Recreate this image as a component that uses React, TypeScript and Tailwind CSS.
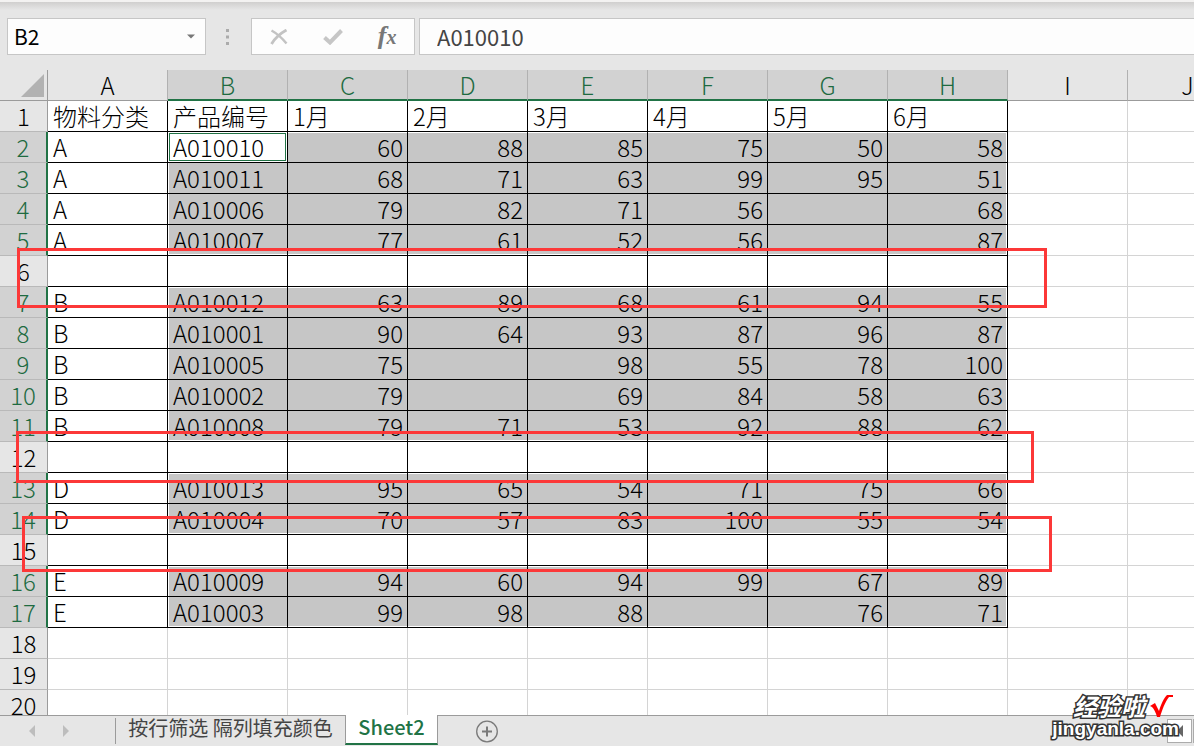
import React from "react";

const columns = ["A", "B", "C", "D", "E", "F", "G", "H", "I", "J"];

const data: string[][] = [
  ["物料分类", "产品编号", "1月", "2月", "3月", "4月", "5月", "6月"],
  ["A", "A010010", "60", "88", "85", "75", "50", "58"],
  ["A", "A010011", "68", "71", "63", "99", "95", "51"],
  ["A", "A010006", "79", "82", "71", "56", "", "68"],
  ["A", "A010007", "77", "61", "52", "56", "", "87"],
  [],
  ["B", "A010012", "63", "89", "68", "61", "94", "55"],
  ["B", "A010001", "90", "64", "93", "87", "96", "87"],
  ["B", "A010005", "75", "", "98", "55", "78", "100"],
  ["B", "A010002", "79", "", "69", "84", "58", "63"],
  ["B", "A010008", "79", "71", "53", "92", "88", "62"],
  [],
  ["D", "A010013", "95", "65", "54", "71", "75", "66"],
  ["D", "A010004", "70", "57", "83", "100", "55", "54"],
  [],
  ["E", "A010009", "94", "60", "94", "99", "67", "89"],
  ["E", "A010003", "99", "98", "88", "", "76", "71"],
  [],
  [],
  [],
];

const TABLE_ROWS = 17;
const TABLE_COLS = 8;

const isSelectedRow = (r: number) => r > 0 && r < TABLE_ROWS && (data[r]?.length ?? 0) > 0;
const isSelectedCol = (c: number) => c >= 1 && c < TABLE_COLS;

function selectionEdges(r: number, c: number): React.CSSProperties {
  const edges: string[] = [];
  if (!isSelectedRow(r - 1)) edges.push("inset 0 1px 0 #fff");
  if (!isSelectedRow(r + 1)) edges.push("inset 0 -1px 0 #fff");
  if (c === 1) edges.push("inset 1px 0 0 #fff");
  if (c === TABLE_COLS - 1) edges.push("inset -1px 0 0 #fff");
  return { boxShadow: edges.join(", ") || undefined };
}

function Cell({ r, c }: { r: number; c: number }) {
  const text = data[r][c] ?? "";
  const inTable = r < TABLE_ROWS && c < TABLE_COLS;
  const border = inTable ? "border-black" : "border-[#d4d4d4]";
  const align = r > 0 && c >= 2 ? "text-right" : "text-left";
  if (r === 1 && c === 1) {
    return (
      <td className="h-[31px] border-r border-b border-black bg-white py-0 pr-1 pl-[5px] leading-[30px] shadow-[inset_0_0_0_1px_#fff,inset_0_0_0_2px_#217346]">
        {text}
      </td>
    );
  }
  const selected = isSelectedRow(r) && isSelectedCol(c);
  return (
    <td
      className={`h-[31px] border-r border-b py-0 pr-1 pl-[5px] leading-[30px] whitespace-nowrap ${border} ${align} ${selected ? "bg-[#c6c6c6]" : "bg-white"}`}
      style={selected ? selectionEdges(r, c) : undefined}
    >
      {text}
    </td>
  );
}

function ColumnHeader({ c, name }: { c: number; name: string }) {
  const on = isSelectedCol(c);
  return (
    <th
      scope="col"
      className={`h-[31px] border-r border-r-[#b1b1b1] p-0 leading-[28px] font-light ${
        on
          ? "border-b-2 border-b-[#217346] bg-[#d2d2d2] text-[#1e6b41]"
          : "border-b border-b-[#9b9b9b] bg-[#e6e6e6] text-black"
      }`}
    >
      {name}
    </th>
  );
}

function RowHeader({ r }: { r: number }) {
  const on = isSelectedRow(r);
  return (
    <th
      scope="row"
      className={`h-[31px] border-b border-b-[#b9b9b9] p-0 text-center leading-[30px] font-light ${
        on
          ? "border-r-2 border-r-[#217346] bg-[#d2d2d2] text-[#1e6b41]"
          : "border-r border-r-[#9b9b9b] bg-[#e6e6e6] text-black"
      }`}
    >
      {r + 1}
    </th>
  );
}

function FormulaBar() {
  return (
    <header className="flex h-[70px] shrink-0 flex-col bg-[#e6e6e6]">
      <div className="h-0.5 bg-[#f3f2f1]" />
      <div className="h-2 bg-linear-to-b from-[#d0cfce] to-[#e6e6e6]" />
      <div className="mt-2 flex h-[37px] pl-[7px]">
        <div className="flex w-[199px] items-center border border-[#c6c6c6] bg-[#fdfdfd] pr-2">
          <input
            aria-label="Name Box"
            defaultValue="B2"
            className="min-w-0 flex-1 bg-transparent pl-1.5 text-[21px] text-black outline-none"
          />
          <button type="button" aria-label="Named ranges" className="p-0.5">
            <svg width="8" height="5" viewBox="0 0 8 5">
              <path d="M0 0.5h8L4 4.5z" fill="#777" />
            </svg>
          </button>
        </div>
        <div className="flex w-[45px] items-center justify-center pr-0.5">
          <svg width="3" height="16" viewBox="0 0 3 16" fill="#ababab">
            <path d="M0 0h3v3H0zM0 6.500h3v3H0zM0 13h3v3H0z" />
          </svg>
        </div>
        <div className="flex w-[164px] items-center justify-around border border-[#c6c6c6] bg-[#fdfdfd]">
          <button type="button" aria-label="Cancel">
            <svg width="18" height="16" viewBox="0 0 18 16" fill="none" stroke="#c3c3c3">
              <path d="M1.500 1.500C6 4 12 9 16.500 14.500" strokeWidth="2.400" />
              <path d="M16.500 1C11 4 5 9 1.500 15" strokeWidth="2.800" />
            </svg>
          </button>
          <button type="button" aria-label="Enter">
            <svg width="20" height="16" viewBox="0 0 20 16" fill="none" stroke="#c6c6c6">
              <path d="M1.500 8.500L7 13.500L18.500 1.500" strokeWidth="4" />
            </svg>
          </button>
          <button
            type="button"
            aria-label="Insert Function"
            className="pb-0.5 font-['Liberation_Serif',serif] text-[26px] leading-none font-bold text-[#777] italic"
          >
            f<span className="text-[20px]">x</span>
          </button>
        </div>
        <input
          aria-label="Formula"
          defaultValue="A010010"
          className="ml-1 min-w-0 flex-1 border border-r-0 border-[#c6c6c6] bg-[#fdfdfd] pl-[17px] text-[22px] text-[#444] outline-none"
        />
      </div>
    </header>
  );
}

function Watermark() {
  return (
    <div className="pointer-events-none absolute right-[15px] bottom-1.5 flex flex-col items-end text-white [paint-order:stroke_fill] [-webkit-text-stroke:3px_#333]">
      <div className="flex items-center gap-1 pr-1.5">
        <span className="text-[24px] leading-[24px] font-bold italic">经验啦</span>
        <svg width="24" height="24" viewBox="0 0 24 24">
          <path d="M1 12L6 9L10 17C12 10 15 4 18 1H24V3H20C16 8 13 16 11 23H8C7 19 5 15 3 13Z" fill="#f00" />
        </svg>
      </div>
      <span className="font-['Liberation_Sans',sans-serif] text-[19px] leading-[22px] font-bold">jingyanla.com</span>
    </div>
  );
}

function SheetTabs() {
  return (
    <footer className="relative flex h-[31px] shrink-0 bg-[#e6e6e6] text-[20px] leading-[24px]">
      <div className="flex w-[116px] items-center justify-between border-t border-[#9b9b9b] pl-7">
        <button type="button" aria-label="Previous sheet">
          <svg width="8" height="12" viewBox="0 0 8 12">
            <path d="M7 0v12L1 6z" fill="#bdbdbd" />
          </svg>
        </button>
        <button type="button" aria-label="Next sheet" className="mr-5">
          <svg width="8" height="12" viewBox="0 0 8 12">
            <path d="M1 0v12L7 6z" fill="#bdbdbd" />
          </svg>
        </button>
        <span className="h-[26px] w-px bg-[#9b9b9b]" />
      </div>
      <button type="button" className="flex w-[229px] items-start justify-center border-t border-[#9b9b9b] whitespace-nowrap text-[#444]">
        按行筛选 隔列填充颜色
      </button>
      <button
        type="button"
        className="mb-px flex w-[93px] items-start justify-center border-x border-b-2 border-x-[#9b9b9b] border-b-[#217346] bg-white font-medium text-[#217346]"
      >
        Sheet2
      </button>
      <div className="flex flex-1 items-center justify-between border-t border-[#9b9b9b] pl-[37px]">
        <button type="button" aria-label="New sheet">
          <svg width="24" height="24" viewBox="0 0 24 24" fill="none" stroke="#7a7a7a">
            <circle cx="12" cy="12.500" r="10.300" strokeWidth="1.300" />
            <path d="M7 12.500h10M12 7.500v10" strokeWidth="2" />
          </svg>
        </button>
        <div className="flex h-6 gap-px">
          <button type="button" aria-label="Scroll left" className="flex w-[25px] items-center justify-center border border-[#ababab] bg-white">
            <svg width="6" height="12" viewBox="0 0 6 12">
              <path d="M6 0v12L0 6z" fill="#666" />
            </svg>
          </button>
          <span className="w-px bg-[#ababab]" />
        </div>
      </div>
      <Watermark />
    </footer>
  );
}

export default function App() {
  return (
    <div className="flex h-screen flex-col overflow-hidden bg-[#e6e6e6] font-['Noto_Sans_CJK_SC',sans-serif]">
      <FormulaBar />
      <main className="relative min-h-0 flex-1 overflow-hidden bg-white">
        <table className="w-[1248px] table-fixed border-separate border-spacing-0 text-[24px] font-light text-black">
          <colgroup>
            <col className="w-12" />
            {columns.map((name) => (
              <col key={name} className="w-[120px]" />
            ))}
          </colgroup>
          <thead>
            <tr>
              <th className="h-[31px] border-r border-b border-[#9b9b9b] bg-[#e6e6e6] p-0">
                <svg className="ml-auto mr-[3px]" width="23" height="23" viewBox="0 0 23 23" aria-label="Select all">
                  <path d="M23 0v23H0z" fill="#b2b2b2" />
                </svg>
              </th>
              {columns.map((name, c) => (
                <ColumnHeader key={name} c={c} name={name} />
              ))}
            </tr>
          </thead>
          <tbody>
            {data.map((_, r) => (
              <tr key={r}>
                <RowHeader r={r} />
                {columns.map((name, c) => (
                  <Cell key={name} r={r} c={c} />
                ))}
              </tr>
            ))}
          </tbody>
        </table>
        <div className="pointer-events-none absolute top-[178px] left-[17px] h-[60px] w-[1030px] border-3 border-[#fc3838]" />
        <div className="pointer-events-none absolute top-[361px] left-4 h-[52px] w-[1018px] border-3 border-[#fc3838]" />
        <div className="pointer-events-none absolute top-[446px] left-[22px] h-[56px] w-[1030px] border-3 border-[#fc3838]" />
      </main>
      <SheetTabs />
    </div>
  );
}
